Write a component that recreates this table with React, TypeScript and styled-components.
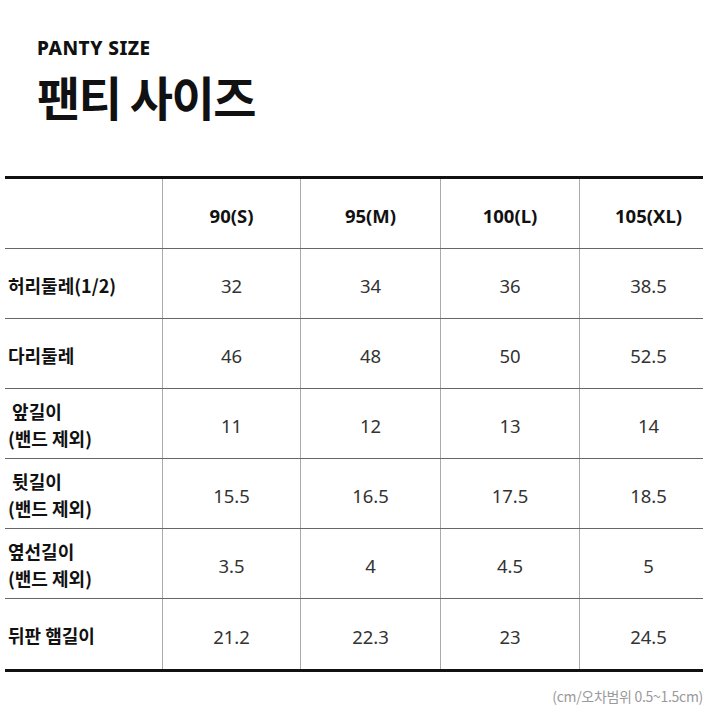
import React from "react";
import styled, { createGlobalStyle } from "styled-components";

const GlobalStyle = createGlobalStyle`
  body {
    margin: 0;
    background: #fff;
    font-family: "Noto Sans CJK KR", "Noto Sans", sans-serif;
    color: #111;
  }
`;

const Page = styled.div`
  width: 720px;
  height: 720px;
  padding-top: 37px;
  box-sizing: border-box;
  overflow: hidden;
`;

const TitleBlock = styled.div`
  padding-left: 37px;
  margin-bottom: 46px;
`;

const EnTitle = styled.div`
  font-family: "Noto Sans", sans-serif;
  font-weight: 800;
  font-size: 19px;
  line-height: 22px;
  letter-spacing: 0.5px;
  color: #111;
`;

const KoTitle = styled.h1`
  margin: 3px 0 0;
  font-family: "Noto Sans CJK KR", sans-serif;
  font-weight: 700;
  font-size: 47px;
  line-height: 68px;
  letter-spacing: -1.5px;
  color: #111;
`;

const Table = styled.div`
  margin-left: 5px;
  width: 698px;
  border-top: 3px solid #111;
  border-bottom: 3px solid #111;
`;

const Row = styled.div<{ $last?: boolean }>`
  display: grid;
  grid-template-columns: 157px 138px 140px 139px 124px;
  height: 70px;
  border-bottom: ${(p) => (p.$last ? "none" : "1px solid #666")};
  box-sizing: border-box;
`;

const Label = styled.div`
  display: flex;
  flex-direction: column;
  justify-content: center;
  padding: 3px 0 0 3px;
  font-weight: 700;
  font-size: 18px;
  line-height: 27px;
  color: #111;
  white-space: pre;
`;

const Cell = styled.div<{ $head?: boolean; $edge?: boolean }>`
  display: flex;
  align-items: center;
  justify-content: center;
  padding: 4px 0 0 ${(p) => (p.$edge ? "14px" : "0")};
  border-left: 1px solid #aaa;
  font-family: "Noto Sans", sans-serif;
  font-size: 18.5px;
  font-weight: ${(p) => (p.$head ? 700 : 400)};
  color: ${(p) => (p.$head ? "#111" : "#333")};
`;

const Note = styled.div`
  width: 703px;
  text-align: right;
  margin-top: 14px;
  font-size: 14px;
  letter-spacing: -0.3px;
  color: #9a9a9a;
`;

const sizes = ["90(S)", "95(M)", "100(L)", "105(XL)"];

const rows: { label: string[]; values: string[] }[] = [
  { label: ["허리둘레(1/2)"], values: ["32", "34", "36", "38.5"] },
  { label: ["다리둘레"], values: ["46", "48", "50", "52.5"] },
  { label: [" 앞길이", "(밴드 제외)"], values: ["11", "12", "13", "14"] },
  { label: [" 뒷길이", "(밴드 제외)"], values: ["15.5", "16.5", "17.5", "18.5"] },
  { label: ["옆선길이", "(밴드 제외)"], values: ["3.5", "4", "4.5", "5"] },
  { label: ["뒤판 햄길이"], values: ["21.2", "22.3", "23", "24.5"] },
];

export default function App() {
  return (
    <Page>
      <GlobalStyle />
      <TitleBlock>
        <EnTitle>PANTY SIZE</EnTitle>
        <KoTitle>팬티 사이즈</KoTitle>
      </TitleBlock>
      <Table>
        <Row>
          <Label />
          {sizes.map((s, i) => (
            <Cell key={s} $head $edge={i === 3}>
              {s}
            </Cell>
          ))}
        </Row>
        {rows.map((r, ri) => (
          <Row key={r.label.join("")} $last={ri === rows.length - 1}>
            <Label>
              {r.label.map((l) => (
                <span key={l}>{l}</span>
              ))}
            </Label>
            {r.values.map((v, i) => (
              <Cell key={i} $edge={i === 3}>
                {v}
              </Cell>
            ))}
          </Row>
        ))}
      </Table>
      <Note>(cm/오차범위 0.5~1.5cm)</Note>
    </Page>
  );
}
